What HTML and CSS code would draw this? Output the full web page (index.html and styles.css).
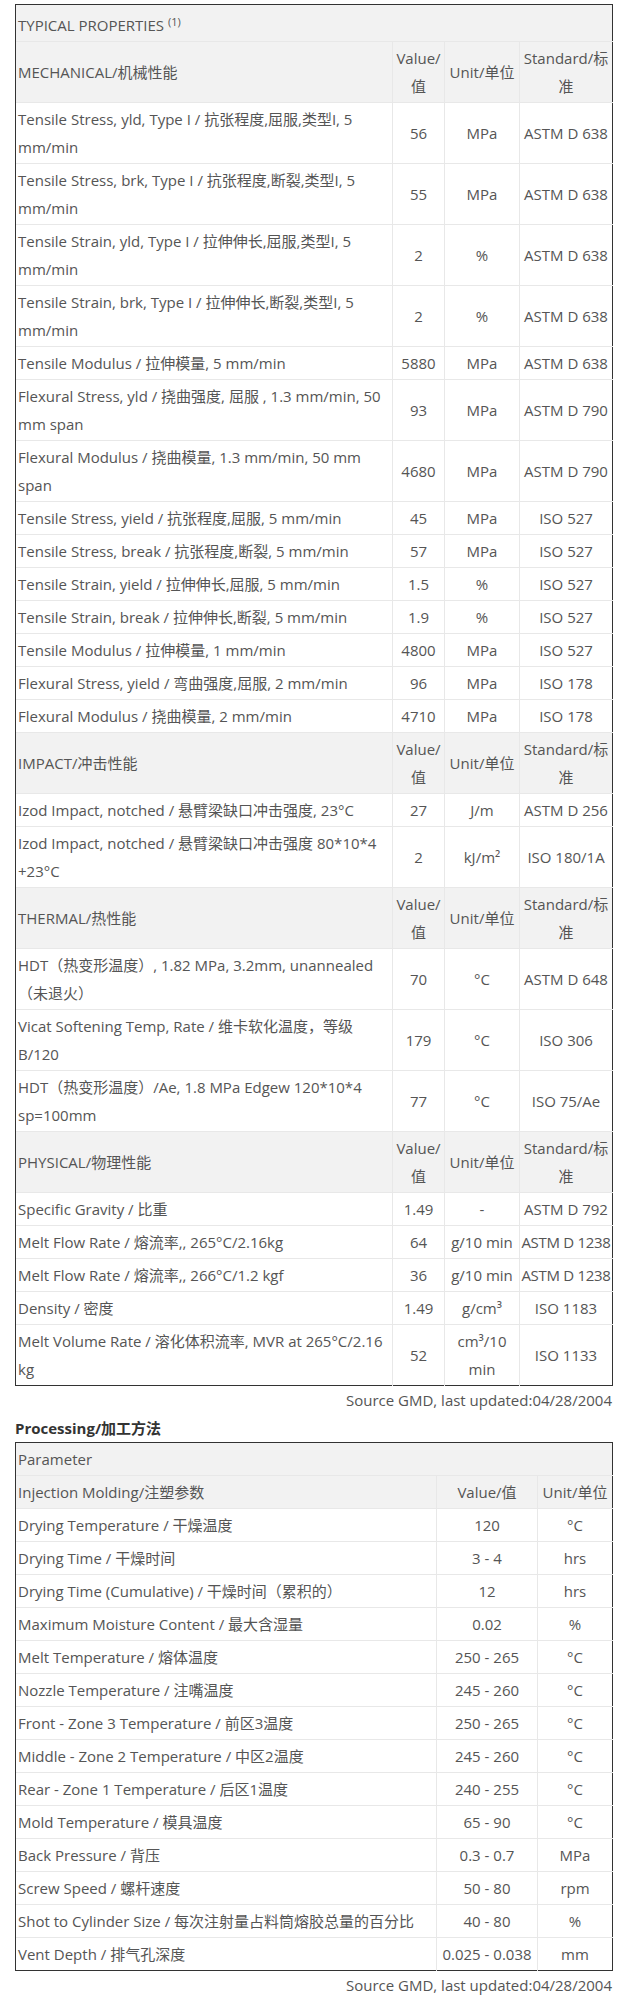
FILE: index.html
```html
<!DOCTYPE html>
<html lang="zh">
<head>
<meta charset="utf-8">
<title>Typical Properties</title>
<link rel="stylesheet" href="styles.css">
</head>
<body>
<div class="page">
  <table class="props">
    <colgroup>
      <col class="c-name"><col class="c-val"><col class="c-unit"><col class="c-std">
    </colgroup>
    <tr class="head top">
      <td colspan="4">TYPICAL PROPERTIES <span class="sup">(1)</span></td>
    </tr>
    <tr class="head">
      <td>MECHANICAL/机械性能</td><td class="ctr">Value/值</td><td class="ctr">Unit/单位</td><td class="ctr">Standard/标准</td>
    </tr>
    <tr><td>Tensile Stress, yld, Type I / 抗张程度,屈服,类型I, 5<br>mm/min</td><td class="ctr">56</td><td class="ctr">MPa</td><td class="ctr nw">ASTM D 638</td></tr>
    <tr><td>Tensile Stress, brk, Type I / 抗张程度,断裂,类型I, 5<br>mm/min</td><td class="ctr">55</td><td class="ctr">MPa</td><td class="ctr nw">ASTM D 638</td></tr>
    <tr><td>Tensile Strain, yld, Type I / 拉伸伸长,屈服,类型I, 5<br>mm/min</td><td class="ctr">2</td><td class="ctr">%</td><td class="ctr nw">ASTM D 638</td></tr>
    <tr><td>Tensile Strain, brk, Type I / 拉伸伸长,断裂,类型I, 5<br>mm/min</td><td class="ctr">2</td><td class="ctr">%</td><td class="ctr nw">ASTM D 638</td></tr>
    <tr><td>Tensile Modulus / 拉伸模量, 5 mm/min</td><td class="ctr">5880</td><td class="ctr">MPa</td><td class="ctr nw">ASTM D 638</td></tr>
    <tr><td>Flexural Stress, yld / 挠曲强度, 屈服 , 1.3 mm/min, 50<br>mm span</td><td class="ctr">93</td><td class="ctr">MPa</td><td class="ctr nw">ASTM D 790</td></tr>
    <tr><td>Flexural Modulus / 挠曲模量, 1.3 mm/min, 50 mm<br>span</td><td class="ctr">4680</td><td class="ctr">MPa</td><td class="ctr nw">ASTM D 790</td></tr>
    <tr><td>Tensile Stress, yield / 抗张程度,屈服, 5 mm/min</td><td class="ctr">45</td><td class="ctr">MPa</td><td class="ctr nw">ISO 527</td></tr>
    <tr><td>Tensile Stress, break / 抗张程度,断裂, 5 mm/min</td><td class="ctr">57</td><td class="ctr">MPa</td><td class="ctr nw">ISO 527</td></tr>
    <tr><td>Tensile Strain, yield / 拉伸伸长,屈服, 5 mm/min</td><td class="ctr">1.5</td><td class="ctr">%</td><td class="ctr nw">ISO 527</td></tr>
    <tr><td>Tensile Strain, break / 拉伸伸长,断裂, 5 mm/min</td><td class="ctr">1.9</td><td class="ctr">%</td><td class="ctr nw">ISO 527</td></tr>
    <tr><td>Tensile Modulus / 拉伸模量, 1 mm/min</td><td class="ctr">4800</td><td class="ctr">MPa</td><td class="ctr nw">ISO 527</td></tr>
    <tr><td>Flexural Stress, yield / 弯曲强度,屈服, 2 mm/min</td><td class="ctr">96</td><td class="ctr">MPa</td><td class="ctr nw">ISO 178</td></tr>
    <tr><td>Flexural Modulus / 挠曲模量, 2 mm/min</td><td class="ctr">4710</td><td class="ctr">MPa</td><td class="ctr nw">ISO 178</td></tr>
    <tr class="head">
      <td>IMPACT/冲击性能</td><td class="ctr">Value/值</td><td class="ctr">Unit/单位</td><td class="ctr">Standard/标准</td>
    </tr>
    <tr><td>Izod Impact, notched / 悬臂梁缺口冲击强度, 23°C</td><td class="ctr">27</td><td class="ctr">J/m</td><td class="ctr nw">ASTM D 256</td></tr>
    <tr><td>Izod Impact, notched / 悬臂梁缺口冲击强度 80*10*4<br>+23°C</td><td class="ctr">2</td><td class="ctr">kJ/m²</td><td class="ctr nw">ISO 180/1A</td></tr>
    <tr class="head">
      <td>THERMAL/热性能</td><td class="ctr">Value/值</td><td class="ctr">Unit/单位</td><td class="ctr">Standard/标准</td>
    </tr>
    <tr><td>HDT（热变形温度）, 1.82 MPa, 3.2mm, unannealed<br>（未退火）</td><td class="ctr">70</td><td class="ctr">°C</td><td class="ctr nw">ASTM D 648</td></tr>
    <tr><td>Vicat Softening Temp, Rate / 维卡软化温度，等级<br>B/120</td><td class="ctr">179</td><td class="ctr">°C</td><td class="ctr nw">ISO 306</td></tr>
    <tr><td>HDT（热变形温度）/Ae, 1.8 MPa Edgew 120*10*4<br>sp=100mm</td><td class="ctr">77</td><td class="ctr">°C</td><td class="ctr nw">ISO 75/Ae</td></tr>
    <tr class="head">
      <td>PHYSICAL/物理性能</td><td class="ctr">Value/值</td><td class="ctr">Unit/单位</td><td class="ctr">Standard/标准</td>
    </tr>
    <tr><td>Specific Gravity / 比重</td><td class="ctr">1.49</td><td class="ctr">-</td><td class="ctr nw">ASTM D 792</td></tr>
    <tr><td>Melt Flow Rate / 熔流率,, 265°C/2.16kg</td><td class="ctr">64</td><td class="ctr nw">g/10 min</td><td class="ctr nw tight">ASTM D 1238</td></tr>
    <tr><td>Melt Flow Rate / 熔流率,, 266°C/1.2 kgf</td><td class="ctr">36</td><td class="ctr nw">g/10 min</td><td class="ctr nw tight">ASTM D 1238</td></tr>
    <tr><td>Density / 密度</td><td class="ctr">1.49</td><td class="ctr">g/cm³</td><td class="ctr nw">ISO 1183</td></tr>
    <tr><td>Melt Volume Rate / 溶化体积流率, MVR at 265°C/2.16<br>kg</td><td class="ctr">52</td><td class="ctr">cm³/10<br>min</td><td class="ctr nw">ISO 1133</td></tr>
  </table>
  <p class="source">Source GMD, last updated:04/28/2004</p>

  <h3 class="section-title">Processing/加工方法</h3>
  <table class="props proc">
    <colgroup>
      <col class="p-name"><col class="p-val"><col class="p-unit">
    </colgroup>
    <tr class="head"><td colspan="3">Parameter</td></tr>
    <tr class="head"><td>Injection Molding/注塑参数</td><td class="ctr">Value/值</td><td class="ctr">Unit/单位</td></tr>
    <tr><td>Drying Temperature / 干燥温度</td><td class="ctr">120</td><td class="ctr">°C</td></tr>
    <tr><td>Drying Time / 干燥时间</td><td class="ctr">3 - 4</td><td class="ctr">hrs</td></tr>
    <tr><td>Drying Time (Cumulative) / 干燥时间（累积的）</td><td class="ctr">12</td><td class="ctr">hrs</td></tr>
    <tr><td>Maximum Moisture Content / 最大含湿量</td><td class="ctr">0.02</td><td class="ctr">%</td></tr>
    <tr><td>Melt Temperature / 熔体温度</td><td class="ctr">250 - 265</td><td class="ctr">°C</td></tr>
    <tr><td>Nozzle Temperature / 注嘴温度</td><td class="ctr">245 - 260</td><td class="ctr">°C</td></tr>
    <tr><td>Front - Zone 3 Temperature / 前区3温度</td><td class="ctr">250 - 265</td><td class="ctr">°C</td></tr>
    <tr><td>Middle - Zone 2 Temperature / 中区2温度</td><td class="ctr">245 - 260</td><td class="ctr">°C</td></tr>
    <tr><td>Rear - Zone 1 Temperature / 后区1温度</td><td class="ctr">240 - 255</td><td class="ctr">°C</td></tr>
    <tr><td>Mold Temperature / 模具温度</td><td class="ctr">65 - 90</td><td class="ctr">°C</td></tr>
    <tr><td>Back Pressure / 背压</td><td class="ctr">0.3 - 0.7</td><td class="ctr">MPa</td></tr>
    <tr><td>Screw Speed / 螺杆速度</td><td class="ctr">50 - 80</td><td class="ctr">rpm</td></tr>
    <tr><td>Shot to Cylinder Size / 每次注射量占料筒熔胶总量的百分比</td><td class="ctr">40 - 80</td><td class="ctr">%</td></tr>
    <tr><td>Vent Depth / 排气孔深度</td><td class="ctr nw">0.025 - 0.038</td><td class="ctr">mm</td></tr>
  </table>
  <p class="source">Source GMD, last updated:04/28/2004</p>
</div>
</body>
</html>
```

FILE: styles.css
```css
html, body {
  margin: 0;
  padding: 0;
  background: #ffffff;
}

body {
  font-family: "Open Sans", "Noto Sans CJK SC", sans-serif;
  font-size: 15px;
  line-height: 28px;
  color: #555555;
}

.page {
  padding: 4px 7px 0 15px;
}

.props {
  width: 100%;
  table-layout: fixed;
  border-collapse: collapse;
  border: 1px solid #333333;
}

.c-name { width: 377px; }
.c-val { width: 52px; }
.c-unit { width: 75px; }
.c-std { width: 93px; }

.p-name { width: 421px; }
.p-val { width: 101px; }
.p-unit { width: 75px; }

.props td {
  padding: 2px 2px;
  border-top: 1px solid #e8e8e8;
  border-left: 1px solid #e8e8e8;
  vertical-align: middle;
  text-align: left;
}

.props tr:first-child td {
  border-top: 1px solid #333333;
}

.props td:first-child {
  border-left: 1px solid #333333;
}

.head td {
  background: #f2f2f2;
}

.top td {
  padding: 6px 2px 2px;
}

.sup {
  font-size: 11px;
  line-height: 0;
  vertical-align: 5px;
}

.ctr {
  text-align: center !important;
}

.nw {
  white-space: nowrap;
  overflow: visible;
}

.tight {
  padding-left: 0 !important;
  padding-right: 0 !important;
  letter-spacing: -0.3px;
}

.source {
  margin: 0;
  text-align: right;
  line-height: 28px;
}

.section-title {
  margin: 0;
  font-size: 15px;
  line-height: 28px;
  font-weight: 700;
  color: #333333;
}
```
